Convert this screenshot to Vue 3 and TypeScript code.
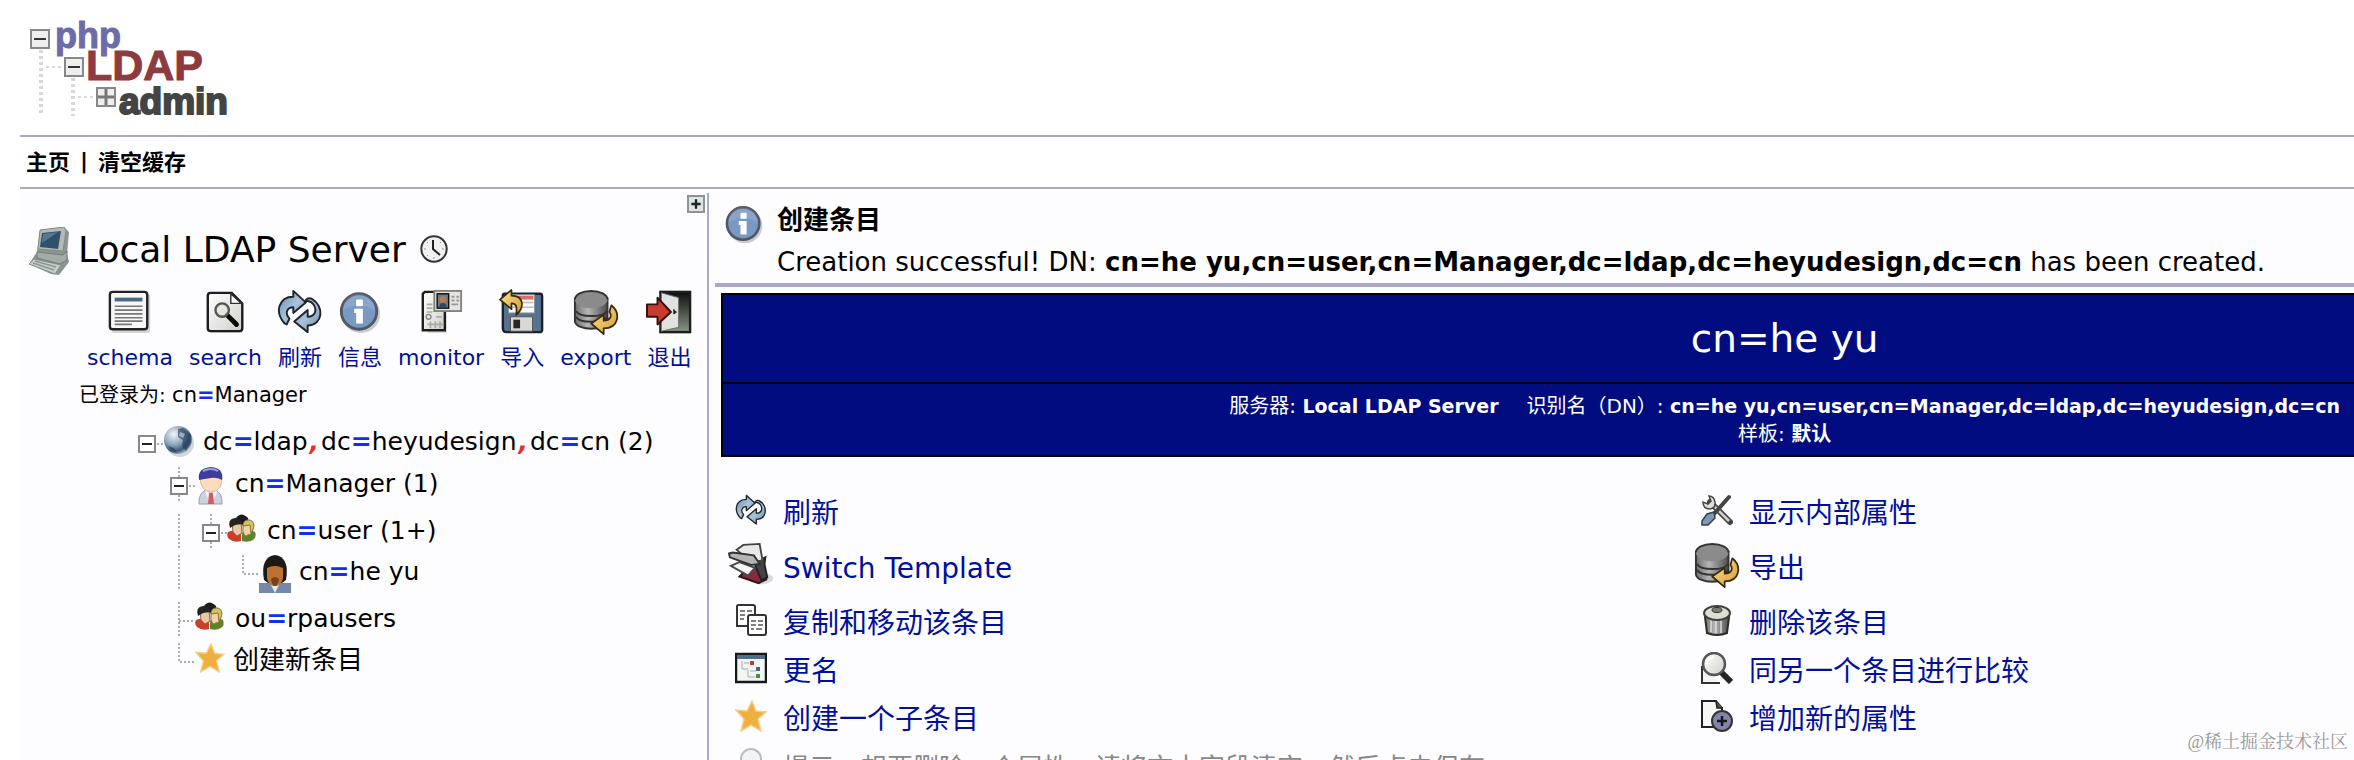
<script setup lang="ts">
interface Action { icon: string; label: string; large?: boolean }
interface TreeNode { guides: string[]; icon: string; parts: string[]; count?: string }

const tools: Action[] = [
  { icon: 'schema', label: 'schema' },
  { icon: 'search', label: 'search' },
  { icon: 'refresh', label: '刷新' },
  { icon: 'info', label: '信息' },
  { icon: 'monitor', label: 'monitor' },
  { icon: 'import', label: '导入' },
  { icon: 'export', label: 'export' },
  { icon: 'logout', label: '退出' },
]

const nodes: TreeNode[] = [
  { guides: ['root'], icon: 'globe', parts: ['dc=ldap', 'dc=heyudesign', 'dc=cn'], count: '(2)' },
  { guides: ['none', 'minus'], icon: 'manager', parts: ['cn=Manager'], count: '(1)' },
  { guides: ['none', 'line', 'minus'], icon: 'group', parts: ['cn=user'], count: '(1+)' },
  { guides: ['none', 'line', 'none', 'corner'], icon: 'user', parts: ['cn=he yu'] },
  { guides: ['none', 'tee'], icon: 'group', parts: ['ou=rpausers'] },
  { guides: ['none', 'corner'], icon: 'star', parts: ['创建新条目'] },
]

const actions: Action[] = [
  { icon: 'refresh', label: '刷新' },
  { icon: 'tools', label: '显示内部属性' },
  { icon: 'switch', label: 'Switch Template', large: true },
  { icon: 'export', label: '导出', large: true },
  { icon: 'copy', label: '复制和移动该条目' },
  { icon: 'trash', label: '删除该条目' },
  { icon: 'rename', label: '更名' },
  { icon: 'compare', label: '同另一个条目进行比较' },
  { icon: 'star', label: '创建一个子条目' },
  { icon: 'add', label: '增加新的属性' },
]

const dn = 'cn=he yu,cn=user,cn=Manager,dc=ldap,dc=heyudesign,dc=cn'
</script>

<template>
  <svg class="sprite" width="0" height="0" aria-hidden="true">
    <defs>
      <linearGradient id="paper" x1="0" y1="0" x2="1" y2="1"><stop offset="0" stop-color="#fff" /><stop offset="1" stop-color="#cfcfca" /></linearGradient>
      <linearGradient id="steel" x1="0" y1="0" x2="1" y2="1"><stop offset="0" stop-color="#5f86ad" /><stop offset=".5" stop-color="#a9c3da" /><stop offset="1" stop-color="#6d8aa6" /></linearGradient>
      <linearGradient id="gold" x1="0" y1="0" x2="1" y2="1"><stop offset="0" stop-color="#ffe595" /><stop offset="1" stop-color="#d39a30" /></linearGradient>
      <linearGradient id="can" x1="0" y1="0" x2="1" y2="0"><stop offset="0" stop-color="#6d6d6d" /><stop offset=".4" stop-color="#b5b5b5" /><stop offset="1" stop-color="#4d4d4d" /></linearGradient>
      <linearGradient id="dark" x1="0" y1="0" x2="0" y2="1"><stop offset="0" stop-color="#0c0f0d" /><stop offset="1" stop-color="#8a9488" /></linearGradient>
      <radialGradient id="ball" cx=".35" cy=".3" r=".75"><stop offset="0" stop-color="#f2f7fb" /><stop offset=".5" stop-color="#8fa5ba" /><stop offset=".8" stop-color="#3c5876" /><stop offset="1" stop-color="#a8bccb" /></radialGradient>

      <symbol id="schema" viewBox="0 0 48 48">
        <rect x="5" y="5" width="40" height="41" rx="3" fill="#bbb" opacity=".6" />
        <rect x="3" y="3" width="39" height="39" rx="3" fill="#f7f7f7" stroke="#222" stroke-width="2.500" />
        <path d="M8 9h29v4H8z" fill="#4e6780" />
        <path d="M8 18h29M8 22h29M8 26h29M8 30h29M8 33.500h29M8 37h18" stroke="#777" stroke-width="1.800" />
      </symbol>
      <symbol id="search" viewBox="0 0 48 48">
        <path d="M8 5h25l8 10v31H8z" fill="#bbb" opacity=".5" />
        <path d="M8 4h22l11 11v26q0 3-3 3H8q-3 0-3-3V7q0-3 3-3z" fill="url(#paper)" stroke="#1d1d1d" stroke-width="2.500" />
        <path d="M29 5v10h11z" fill="#fff" stroke="#333" stroke-width="1.500" />
        <path d="M25 27l10 10" stroke="#080808" stroke-width="5" stroke-linecap="round" />
        <circle cx="20" cy="22" r="7" fill="#e4e6dd" fill-opacity=".8" stroke="#555" stroke-width="2.500" />
      </symbol>
      <symbol id="refresh" viewBox="0 0 48 48">
        <g stroke="#20252a" stroke-width="2" stroke-linejoin="round" fill="url(#steel)">
          <path d="M8 36C-3 24 2 8 17 8V2l13 12-13 11v-6c-7 0-9 7-4 12l-3 6z" />
          <path d="M36 10c14 8 12 28-4 28v7L18 34l14-12v7c8 0 10-7 6-13-3-4-8-4-9-2 1-4 4-5 7-4z" />
        </g>
      </symbol>
      <symbol id="info" viewBox="0 0 48 48">
        <circle cx="25" cy="26" r="20" fill="#999" opacity=".5" />
        <circle cx="23" cy="23.500" r="18.500" fill="#7a99c2" stroke="#4f5867" stroke-width="3" />
        <path d="M6 22a17 17 0 0 1 34 0q-17-9-34 0z" fill="#fff" opacity=".12" />
        <rect x="20" y="11" width="7" height="7" rx="1" fill="#fff" />
        <path d="M18 20.500h9V36h-7V25h-2z" fill="#fff" />
      </symbol>
      <symbol id="monitor" viewBox="0 0 48 48">
        <path d="M7 4h20v40H7z" fill="#bbb" transform="translate(3 2)" opacity=".5" />
        <path d="M7 3h21v40H5V5z" fill="url(#paper)" stroke="#1d1d1d" stroke-width="2.500" />
        <path d="M9 16h6M9 20h6M9 24h6M19 29h6M10 37h16M13 34v7M18 34v7M23 34v7" stroke="#aaa" stroke-width="1.800" />
        <circle cx="11" cy="29" r="2.500" fill="none" stroke="#888" stroke-width="1.500" />
        <rect x="17" y="2" width="28" height="21" fill="#e5e4de" stroke="#85837d" stroke-width="2" />
        <rect x="20" y="5" width="12" height="15" fill="#667d8c" stroke="#111" stroke-width="1.500" />
        <circle cx="26" cy="11" r="3.500" fill="#bf7b45" /><path d="M22 19c0-6 8-6 8 0z" fill="#30465e" />
        <path d="M35 8h3m2 0h3M35 12h3m2 0h3M35 16h7" stroke="#999" stroke-width="2" />
      </symbol>
      <symbol id="import" viewBox="0 0 48 48">
        <path d="M6 5h37q2 0 2 3v35q0 2-3 2H8q-4 0-4-4V7q0-2 2-2z" fill="#577291" stroke="#1b222a" stroke-width="2.500" />
        <rect x="10" y="6" width="27" height="19" fill="#fafafa" stroke="#8495a5" />
        <path d="M11 9h25" stroke="#db6c62" stroke-width="4" /><path d="M11 14h25M11 19h25" stroke="#c9b9b7" stroke-width="1.500" />
        <rect x="12" y="29" width="23" height="15" fill="#d8d8d5" stroke="#555" /><rect x="15" y="32" width="7" height="9" fill="#282828" />
        <path d="M1 11L13 1v6c13 0 14 12 5 20 1-9 0-12-5-12v6z" fill="url(#gold)" stroke="#392a0f" stroke-width="1.800" stroke-linejoin="round" />
      </symbol>
      <symbol id="export" viewBox="0 0 48 48">
        <path d="M2 10v24c2 10 32 10 34 0V10z" fill="url(#can)" stroke="#333" stroke-width="2" />
        <path d="M3 23c4 7 29 7 32 0M3 29c4 7 29 7 32 0" fill="none" stroke="#333" stroke-width="2" />
        <ellipse cx="19" cy="11" rx="17" ry="9" fill="#8b8b8b" />
        <path d="M2 11a17 9 0 0 1 34 0" fill="none" stroke="#333" stroke-width="2" />
        <path d="M40 17c10 8 8 24-8 24v6L19 36l13-9v6c7 0 9-5 6-9z" fill="url(#gold)" stroke="#38290f" stroke-width="1.800" stroke-linejoin="round" />
      </symbol>
      <symbol id="logout" viewBox="0 0 48 48">
        <rect x="15" y="3" width="31" height="42" fill="url(#dark)" stroke="#1b1e1b" stroke-width="2.500" />
        <path d="M16 4l18 5v31l-18 4z" fill="#dfe2df" stroke="#6d726d" /><path d="M29 21v5l3-2" fill="#222" stroke="#222" />
        <path d="M1 16h11V9l14 15-14 13v-8H1z" fill="#c93a2e" stroke="#351010" stroke-width="2" stroke-linejoin="round" />
      </symbol>
      <symbol id="computer" viewBox="0 0 42 48">
        <path d="M12 3l24-3 5 5-2 22 2 8-10 13-8-1L1 37l8-12z" fill="#8d9592" />
        <path d="M12 3l24-3 2 4-3 20-25-2z" fill="#b4bbb6" stroke="#7f8b88" />
        <path d="M14 6l19-2-3 18-18-2z" fill="#31506c" /><path d="M15 7l15-2-16 11z" fill="#587894" />
        <path d="M9 25l26 3 4-4v9l-7 4-23-6z" fill="#a4aca8" stroke="#727c79" />
        <path d="M6 32l27 6-6 9L1 37z" fill="#c9ceca" stroke="#87908b" /><path d="M7 34l21 6M5 36l21 7" stroke="#8d9692" stroke-width="1.500" />
      </symbol>
      <symbol id="clock" viewBox="0 0 28 28">
        <circle cx="14" cy="14" r="12.700" fill="#f1f1f1" stroke="#333" stroke-width="2" /><path d="M13 5v9l7 6" fill="none" stroke="#222" stroke-width="2" />
        <path d="M14 22v2M4 14h2M22 14h2M7 7l1 1M21 7l-1 1M7 21l1-1" stroke="#999" />
      </symbol>
      <symbol id="globe" viewBox="0 0 32 34">
        <ellipse cx="17" cy="18" rx="14" ry="14" fill="#999" opacity=".4" /><circle cx="15" cy="15" r="14" fill="url(#ball)" />
        <path d="M15 4l5-1 7 6 1 9-5 8-4-5 1-6-5-3zM5 21l6 2 3 5-6-3z" fill="#1d3557" opacity=".6" /><path d="M17 7l5 2-2 4-4-2z" fill="#b9c9d5" opacity=".7" />
      </symbol>
      <symbol id="manager" viewBox="0 0 32 38">
        <path d="M4 37q-1-12 9-15h5q10 3 9 15z" fill="#cdd1e0" stroke="#999fb4" /><path d="M10 23l6 4 5-4 1 3-5 9h-3z" fill="#f4f5f9" /><path d="M14 26h4l1 11h-6z" fill="#d95a5c" />
        <path d="M5 10h22q1 14-11 15Q5 24 5 10z" fill="#fbdcbc" stroke="#e3b98f" />
        <path d="M4 13Q2 1 16 0q13 1 11 13-5-3-11-2-7 1-12 2z" fill="#3d3d9c" /><path d="M8 4q8-4 15 0" fill="none" stroke="#a3a3d8" stroke-width="2" />
      </symbol>
      <symbol id="group" viewBox="0 0 32 34">
        <path d="M9 4q5-7 12 0l1 7H9z" fill="#1b1c1b" />
        <path d="M1 18q7-4 13 2v7q-7 2-12-2-3-3-1-7z" fill="#c84029" /><path d="M15 19q7-5 13-1 2 5-2 8-5 3-11 1z" fill="#5d822d" />
        <path d="M5 8h9l1 11-5 3-4-4z" fill="#e9c7a0" stroke="#8d6641" /><path d="M3 14Q0 5 8 4q7 0 7 6l-7 1z" fill="#25231f" />
        <path d="M16 10h8v10l-6 2-2-4z" fill="#f2d2a6" stroke="#94774b" /><path d="M16 12q0-7 7-6 6 2 3 10l-2 3-1-8z" fill="#d4c262" stroke="#867637" />
      </symbol>
      <symbol id="user" viewBox="0 0 32 38">
        <path d="M0 28h32v10H0z" fill="#7489a7" /><path d="M12 30h8l-4 8z" fill="#e6e8eb" />
        <path d="M5 25Q1 2 16 0q15 2 11 25l-4 3H9z" fill="#1b1a17" />
        <path d="M8 13q8-4 16 0v10q-1 6-6 8h-4q-5-2-6-8z" fill="#bd7231" /><path d="M12 24q4-4 8 0-1 7-4 7t-4-7z" fill="#71431f" />
      </symbol>
      <symbol id="star" viewBox="0 0 32 32"><path d="M17 1l4 10 10 1-8 7 3 12-10-6-10 6 3-12-8-9 11 1z" fill="#edaf3e" stroke="#f5cf86" stroke-width="1.500" /></symbol>
      <symbol id="tools" viewBox="0 0 32 32">
        <path d="M9 8l20 20" stroke="#444" stroke-width="6" stroke-linecap="round" /><path d="M9 8l19 19" stroke="#d2d2ce" stroke-width="2.500" />
        <path d="M8 2l2 5-3 3-5-2q0 7 7 7 6-1 5-7-1-6-6-6z" fill="#dcdcd8" stroke="#444" stroke-width="1.500" />
        <path d="M28 3L13 20" stroke="#444" stroke-width="4" stroke-linecap="round" /><path d="M13 18l-7 2-5 7v4h6l7-7z" fill="#7e97b4" stroke="#34404e" stroke-width="1.500" />
      </symbol>
      <symbol id="switch" viewBox="0 0 48 48">
        <ellipse cx="34" cy="38" rx="13" ry="6" fill="#999" opacity=".35" />
        <path d="M12 36l8-8 16-3 4 14-8 4z" fill="#8a2a36" stroke="#2b181b" stroke-width="2" />
        <path d="M28 22l11-6-1 7 3 14-6 3-6-14z" fill="#444" stroke="#222" stroke-width="2" />
        <path d="M3 25l18 10 7-8-16-6z" fill="#f6f6f6" stroke="#4a4a4a" stroke-width="2" />
        <path d="M9 8l7-5 17-1 3 17-12 3z" fill="#e8e8e8" stroke="#444" stroke-width="2" />
        <path d="M1 12l4-1 22 3 6 9-9 1-22-8z" fill="#b4b4b4" stroke="#333" stroke-width="2" />
      </symbol>
      <symbol id="copy" viewBox="0 0 32 32">
        <g fill="#fff" stroke="#333" stroke-width="2"><path d="M3 1h15q2 0 2 2v19H2V2z" /><rect x="13" y="11" width="18" height="20" rx="2" /></g>
        <path d="M5 7h5m2 0h5M5 11h5M5 15h4M16 17h5m2 0h5M16 21h5m2 0h5M16 25h3m2 0h6" stroke="#555" stroke-width="1.500" />
      </symbol>
      <symbol id="trash" viewBox="0 0 32 32">
        <path d="M4 13h24l-2 16q-10 4-20 0z" fill="url(#can)" stroke="#2c2c28" stroke-width="2" /><path d="M10 16v12M15 16v13M20 16v13" stroke="#ddd" stroke-width="1.500" />
        <ellipse cx="16" cy="9" rx="13" ry="7" fill="#deded3" stroke="#3f3f39" stroke-width="2" /><ellipse cx="16" cy="6" rx="5" ry="2.500" fill="#837b70" stroke="#333" />
      </symbol>
      <symbol id="rename" viewBox="0 0 32 32">
        <rect x="1" y="2" width="30" height="28" fill="#f4f4f3" stroke="#15191c" stroke-width="2.500" /><path d="M2 3h28v4H2z" fill="#536d89" />
        <path d="M7 9v8h6M9 11h5M13 18v7h7M15 19h6" fill="none" stroke="#aaa" /><path d="M15 9h4v4h-4z" fill="#bc3d35" /><path d="M21 15h4v4h-4z" fill="#4b6480" /><path d="M21 22h4v4h-4z" fill="#439338" />
      </symbol>
      <symbol id="compare" viewBox="0 0 32 32">
        <path d="M1 14v17h18" fill="#f4f4f4" stroke="#333" stroke-width="2" /><path d="M20 20l10 10" stroke="#252525" stroke-width="6" /><circle cx="13" cy="12" r="11" fill="url(#paper)" stroke="#555" stroke-width="2.500" /><path d="M6 12q0-6 7-7" fill="none" stroke="#fff" stroke-width="2" />
      </symbol>
      <symbol id="add" viewBox="0 0 32 32">
        <path d="M1 1h14l6 7v19H1z" fill="#f7f7f5" stroke="#222" stroke-width="2" /><path d="M15 1l1 7h6" fill="#555" stroke="#222" stroke-width="1.500" /><circle cx="21" cy="21" r="10" fill="#8683ac" stroke="#333" stroke-width="2" /><path d="M21 16v10M16 21h10" stroke="#171721" stroke-width="2.500" />
      </symbol>
      <symbol id="bulb" viewBox="0 0 32 32"><circle cx="16" cy="11" r="10" fill="#f3f4f8" stroke="#b8bcc4" stroke-width="2" /><path d="M12 21h8v8h-8z" fill="#bbb" /></symbol>
      <symbol id="none" viewBox="0 0 32 36"></symbol>
      <symbol id="line" viewBox="0 0 32 36"><path d="M16 0v34" class="dots" /></symbol>
      <symbol id="tee" viewBox="0 0 32 36"><path d="M16 0v34M16 19h16" class="dots" /></symbol>
      <symbol id="corner" viewBox="0 0 32 36"><path d="M16 0v19h16" class="dots" /></symbol>
      <symbol id="root" viewBox="0 0 32 36"><path d="M26 19h6" class="dots" /><rect x="8" y="11" width="16" height="16" fill="#fff" stroke="#888" stroke-width="2" /><path d="M11 19h10" stroke="#222" stroke-width="2" /></symbol>
      <symbol id="minus" viewBox="0 0 32 36"><path d="M16 0v34M26 19h6" class="dots" /><rect x="8" y="11" width="16" height="16" fill="#fff" stroke="#888" stroke-width="2" /><path d="M11 19h10" stroke="#222" stroke-width="2" /></symbol>
    </defs>
  </svg>

  <div class="page">
    <div class="canvas">
      <header class="brand">
        <svg class="logo" viewBox="0 0 200 100" role="img" aria-label="phpLDAPadmin">
          <g stroke="#d8d8d8" stroke-width="4" stroke-dasharray="3 3"><path d="M11 30v66M43 58v38" /><path d="M16 47h18M48 77h16" stroke-width="2" /></g>
          <g fill="#eee" stroke="#888" stroke-width="2"><path d="M1 10h18v18H1zM35 38h18v18H35zM67 68h18v18H67z" /></g>
          <path d="M4 19h12M38 47h12" stroke="#333" stroke-width="2" /><path d="M68 77h16M76 69v16" stroke="#777" stroke-width="3" />
          <text x="25" y="28" class="php">php</text>
          <text x="56" y="60" class="ldap">LDAP</text>
          <text x="89" y="94" class="adm">admin</text>
        </svg>
      </header>
      <nav class="menu"><a href="#">主页</a><span>|</span><a href="#">清空缓存</a></nav>

      <div class="body">
        <aside class="side">
          <button class="toggle" type="button" aria-label="展开">
            <svg viewBox="0 0 18 18"><path d="M9 3v12M3 9h12" stroke="#222" stroke-width="3" /></svg>
          </button>
          <div class="server">
            <svg class="computer"><use href="#computer" /></svg>
            <h1>Local LDAP Server</h1>
            <svg class="clock"><use href="#clock" /></svg>
          </div>
          <div class="tools">
            <a v-for="t in tools" :key="t.icon" href="#"><svg><use :href="'#' + t.icon" /></svg><span>{{ t.label }}</span></a>
          </div>
          <p class="login">已登录为: <span class="latin">cn<b class="eq">=</b>Manager</span></p>
          <ul class="tree">
            <li v-for="(n, i) in nodes" :key="i" :class="n.icon">
              <svg v-for="(g, j) in n.guides" :key="j" class="guide"><use :href="'#' + g" /></svg>
              <svg class="node" :class="n.icon"><use :href="'#' + n.icon" /></svg>
              <a href="#"><template v-for="(p, k) in n.parts" :key="k"><b v-if="k" class="comma">,</b><template v-if="p.includes('=')">{{ p.split('=')[0] }}<b class="eq">=</b>{{ p.split('=')[1] }}</template><template v-else>{{ p }}</template></template><template v-if="n.count">&nbsp;{{ n.count }}</template></a>
            </li>
          </ul>
        </aside>

        <main class="main">
          <section class="message">
            <svg><use href="#info" /></svg>
            <div><h2>创建条目</h2><p>Creation successful! DN: <b>{{ dn }}</b> has been created.</p></div>
          </section>
          <div class="entry">
            <section class="heading">
              <h2>cn=he yu</h2>
              <div class="facts">
                <p>服务器: <b class="value">Local LDAP Server</b><span class="dn">识别名（DN）: <b class="value">{{ dn }}</b></span></p>
                <p>样板: <b>默认</b></p>
              </div>
            </section>
            <div class="actions">
              <div v-for="a in actions" :key="a.label" class="action" :class="{ large: a.large }">
                <span class="pic"><svg><use :href="'#' + a.icon" /></svg></span><a href="#">{{ a.label }}</a>
              </div>
              <div class="action hint"><span class="pic"><svg><use href="#bulb" /></svg></span><span>提示：想要删除一个属性，请将文本字段清空，然后点击保存。</span></div>
            </div>
          </div>
        </main>
      </div>
    </div>
    <span class="mark">@稀土掘金技术社区</span>
  </div>
</template>

<style>
body { margin: 0; }
</style>

<style scoped>
* { box-sizing: border-box; }
h1, h2, p, ul { margin: 0; padding: 0; font-weight: normal; }
a { color: inherit; text-decoration: none; }
svg { display: block; flex: none; }
.sprite { position: absolute; }
.dots { fill: none; stroke: #aaa; stroke-width: 2; stroke-dasharray: 2 2; }
.page { position: relative; height: 100vh; overflow: hidden; background: #fff; color: #000; font-family: "DejaVu Sans", "Noto Sans CJK SC", sans-serif; }
.canvas { width: 121%; padding-left: 20px; }
.brand { height: 137px; padding: 20px 0 0 10px; border-bottom: 2px solid #aaaac4; }
.logo { width: 200px; height: 100px; overflow: visible; }
.logo text { font-family: "Liberation Sans", sans-serif; font-weight: bold; }
.logo .php { font-size: 36px; fill: #6c6cab; stroke: #6c6cab; stroke-width: 1; }
.logo .ldap { font-size: 43px; fill: #8f3a3e; stroke: #8f3a3e; stroke-width: 1; }
.logo .adm { font-size: 37px; fill: #444; stroke: #444; stroke-width: 2; }
.menu { display: flex; align-items: center; gap: 10px; height: 52px; padding: 0 0 4px 6px; border-bottom: 2px solid #aaaac4; font-size: 22px; font-weight: bold; }
.body { display: flex; margin-top: 4px; }
.side { flex: none; width: 689px; height: calc(100vh - 193px); border-right: 2px solid #aaaac4; background: #fdfdff; }
.toggle { display: block; width: 18px; height: 18px; margin: 2px 2px 0 auto; padding: 0; border: 2px solid #8c9494; background: #dfe4e4; }
.toggle svg { width: 14px; height: 14px; }
.server { display: flex; align-items: center; height: 48px; margin-top: 14px; padding-left: 8px; }
.server h1 { margin: 0 14px 0 8px; font-size: 36px; line-height: 46px; padding-bottom: 2px; }
.computer { width: 42px; height: 48px; }
.clock { width: 28px; height: 28px; margin-bottom: 4px; }
.tools { display: flex; gap: 16px; margin-top: 14px; padding-left: 67px; color: #00109c; font-size: 22px; line-height: 30px; }
.tools a { display: flex; flex-direction: column; align-items: center; gap: 8px; }
.tools svg { width: 46px; height: 46px; margin: 0 -4px; }
.login { margin-top: 8px; padding-left: 59px; font-size: 20px; line-height: 28px; }
.latin { font-size: 21px; }
.eq { color: #1030f0; }
.comma { margin: 0 2px; color: #e8302a; font-style: italic; }
.tree { margin-top: 16px; padding-left: 111px; list-style: none; font-size: 25px; line-height: 34px; }
.tree li { display: flex; height: 42px; }
.tree li.manager, .tree li.user { height: 47px; }
.tree li.group { height: 41px; }
.tree li.star { font-size: 26px; }
.tree a { margin-left: 8px; white-space: nowrap; }
.guide { width: 32px; height: 36px; }
.node { width: 32px; height: 34px; }
.node.manager, .node.user { height: 38px; }
.node.star { width: 30px; height: 30px; }
.main { flex: 1; min-width: 0; padding-left: 6px; background: #fdfdff; }
.message { display: flex; gap: 12px; height: 94px; padding: 10px 0 0 8px; border-bottom: 4px solid #aaaac8; font-size: 26px; white-space: nowrap; }
.message svg { width: 42px; height: 42px; }
.message h2 { font-size: 26px; font-weight: bold; line-height: 34px; }
.message p { margin-top: 7px; line-height: 36px; }
.entry { padding: 6px 0 0 6px; }
.heading { border: 2px solid #000; background: #000c80; color: #fff; text-align: center; }
.heading h2 { height: 89px; padding-top: 14px; border-bottom: 2px solid #000; font-size: 39px; line-height: 60px; }
.facts { height: 71px; padding-top: 8px; font-size: 20px; line-height: 28px; white-space: nowrap; }
.value { font-size: 19px; }
.dn { margin-left: 28px; }
.actions { display: grid; grid-template-columns: 5fr 6fr; padding: 33px 0 0 2px; font-size: 28px; line-height: 36px; white-space: nowrap; color: #00109c; }
.action { display: flex; align-items: center; gap: 4px; height: 48px; }
.action.large { height: 62px; }
.pic { display: flex; justify-content: center; width: 56px; padding-bottom: 8px; }
.pic svg { width: 32px; height: 32px; }
.large .pic svg { width: 46px; height: 46px; }
.hint { color: #888; font-size: 26px; }
.mark { position: absolute; right: 6px; bottom: 6px; color: #999; font: 18px/24px "Liberation Serif", "Noto Serif CJK SC", "Noto Sans CJK SC", serif; }
</style>
